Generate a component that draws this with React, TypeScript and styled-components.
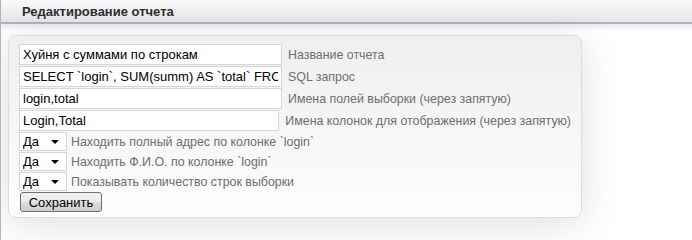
import React from "react";
import styled, { createGlobalStyle } from "styled-components";

const Global = createGlobalStyle`
  html, body { margin: 0; padding: 0; background: #fff; }
  body { font-family: Arial, "Liberation Sans", sans-serif; }
`;

const Page = styled.div`
  width: 692px;
  height: 240px;
  border-left: 1px solid #b4b4bc;
  box-sizing: border-box;
  overflow: hidden;
  background: #fff;
`;

const Header = styled.div`
  height: 24px;
  box-sizing: border-box;
  padding: 0 0 0 21px;
  background: linear-gradient(#fafafb, #e6e6ea);
  border-bottom: 2px solid #b2b2bc;
  display: flex;
  align-items: center;
  font: bold 13px "Liberation Sans", Arial, sans-serif;
  color: #2e2e2e;
`;

const HeaderShade = styled.div`
  height: 5px;
  background: linear-gradient(#ececef, #f6f6f8);
`;

const Body = styled.div`
  padding: 6px 0 0 7px;
`;

const Box = styled.div`
  width: 574px;
  box-sizing: border-box;
  border: 1px solid #dcdcdc;
  border-radius: 8px;
  padding: 7px 10px 5px 10px;
  background: linear-gradient(#efefef, #fdfdfd);
  box-shadow: 0 6px 40px rgba(0, 0, 0, 0.13);
  display: flex;
  flex-direction: column;
`;

const Row = styled.div<{ $h: number }>`
  display: flex;
  align-items: center;
  height: ${(p) => p.$h}px;
  gap: 6px;
`;

const TextInput = styled.input`
  width: 263px;
  height: 21px;
  box-sizing: border-box;
  border: 1px solid #d6d6d6;
  background: #fff;
  padding: 0 3px;
  margin: 0;
  font: 13px "Liberation Sans", Arial, sans-serif;
  color: #000;
  outline: none;
`;

const Label = styled.span`
  font: 12.4px "Liberation Sans", Arial, sans-serif;
  color: #6e6e6e;
  white-space: nowrap;
  padding-top: 1px;
`;

const SelectWrap = styled.div`
  position: relative;
  width: 48px;
  height: 19px;
  margin-right: -2px;
`;

const Select = styled.select`
  appearance: none;
  width: 48px;
  height: 19px;
  box-sizing: border-box;
  border: 1px solid #d6d6d6;
  background: #fff;
  margin: 0;
  padding: 0 0 0 3px;
  font: 13px "Liberation Sans", Arial, sans-serif;
  color: #000;
  outline: none;
`;

const Arrow = styled.span`
  position: absolute;
  right: 8px;
  top: 8px;
  width: 0;
  height: 0;
  border-left: 4px solid transparent;
  border-right: 4px solid transparent;
  border-top: 4px solid #000;
  pointer-events: none;
`;

const Button = styled.button`
  margin: 1px 0 0 1px;
  width: 82px;
  height: 20px;
  box-sizing: border-box;
  border: 1px solid #707070;
  border-radius: 3px;
  background: linear-gradient(#f2f2f2 0%, #ebebeb 50%, #dddddd 50%, #cfcfcf 100%);
  font: 13px "Liberation Sans", Arial, sans-serif;
  color: #000;
  padding: 0;
`;

const fields = [
  { value: "Хуйня с суммами по строкам", label: "Название отчета" },
  { value: "SELECT `login`, SUM(summ) AS `total` FROM `payments` GROUP BY `login`", label: "SQL запрос" },
  { value: "login,total", label: "Имена полей выборки (через запятую)" },
  { value: "Login,Total", label: "Имена колонок для отображения (через запятую)" },
];

const options = [
  "Находить полный адрес по колонке `login`",
  "Находить Ф.И.О. по колонке `login`",
  "Показывать количество строк выборки",
];

export default function App() {
  return (
    <>
      <Global />
      <Page>
        <Header>Редактирование отчета</Header>
        <HeaderShade />
        <Body>
          <Box>
            {fields.map((f) => (
              <Row $h={22} key={f.label}>
                <TextInput defaultValue={f.value} />
                <Label>{f.label}</Label>
              </Row>
            ))}
            {options.map((o) => (
              <Row $h={20} key={o}>
                <SelectWrap>
                  <Select defaultValue="1">
                    <option value="1">Да</option>
                    <option value="0">Нет</option>
                  </Select>
                  <Arrow />
                </SelectWrap>
                <Label>{o}</Label>
              </Row>
            ))}
            <Button>Сохранить</Button>
          </Box>
        </Body>
      </Page>
    </>
  );
}
